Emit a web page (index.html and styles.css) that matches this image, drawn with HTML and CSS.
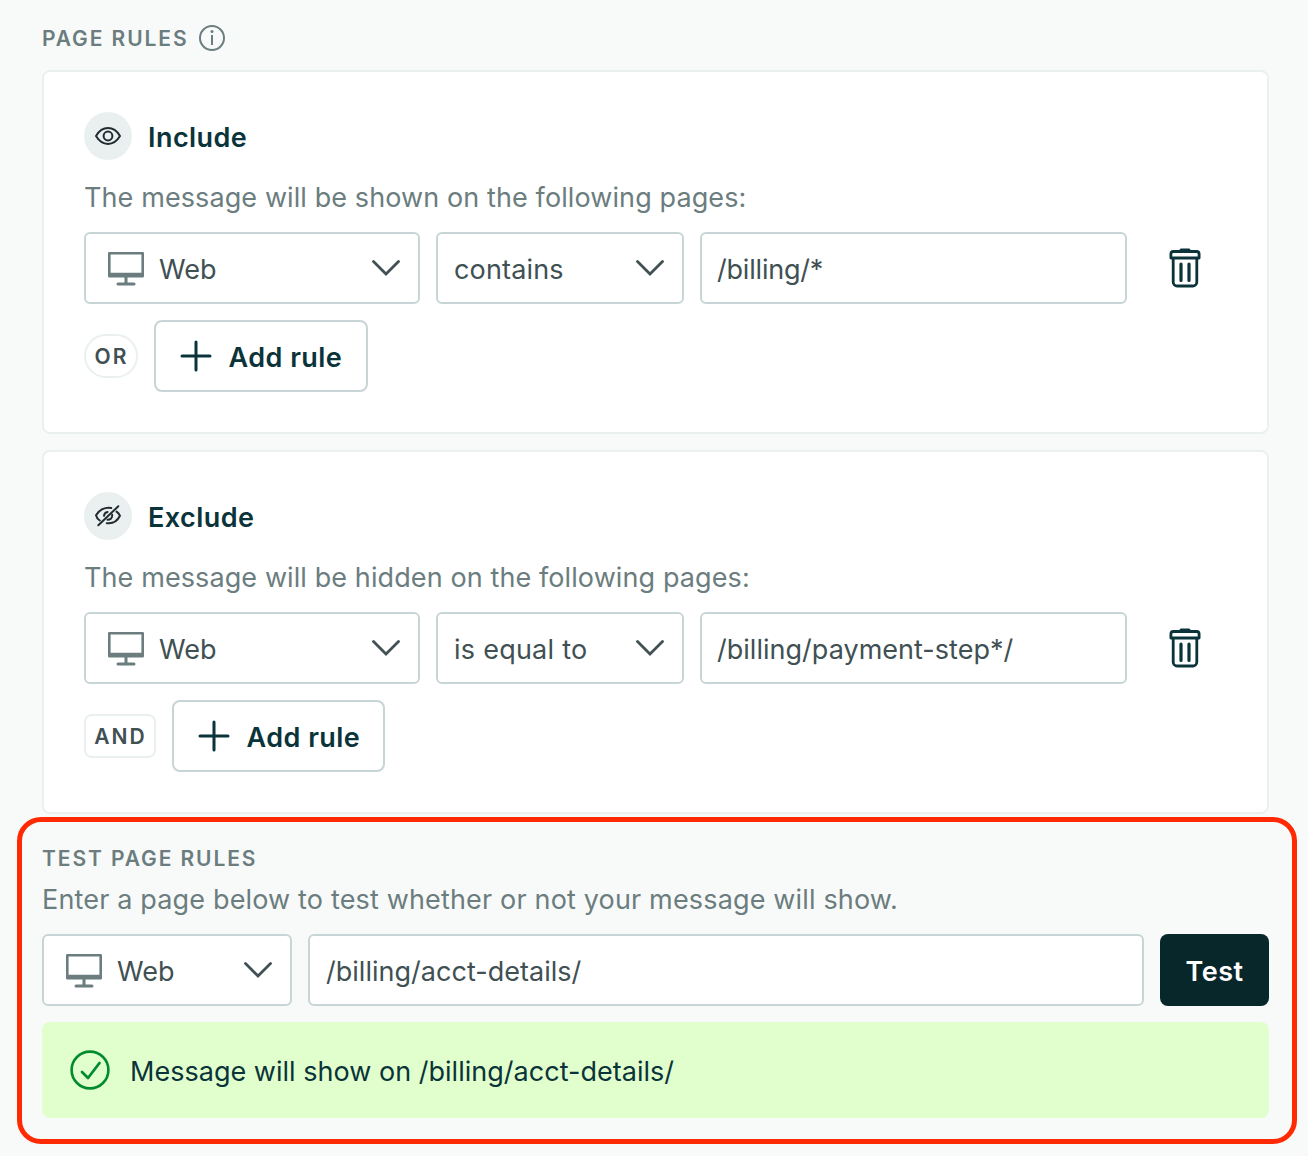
FILE: index.html
```html
<!DOCTYPE html>
<html lang="en">
<head>
<meta charset="utf-8">
<title>Page rules</title>
<link rel="stylesheet" href="styles.css">
</head>
<body>
<svg class="sprite" aria-hidden="true">
  <symbol id="monitor" viewBox="0 0 36 34">
    <path d="M1.300 1.300h33.400v23H1.300z" fill="none" stroke="currentColor" stroke-width="2.600" stroke-linejoin="round"/>
    <path d="M1 20.800h34v4.200H1zM16.500 25h3v6h-3z" fill="currentColor"/>
    <path d="M10 32h16" stroke="currentColor" stroke-width="3" stroke-linecap="round"/>
  </symbol>
  <symbol id="chevron" viewBox="0 0 28 16">
    <path d="M1.500 1.500L14 14L26.500 1.500" fill="none" stroke="currentColor" stroke-width="2.800" stroke-linecap="round"/>
  </symbol>
  <symbol id="plus" viewBox="0 0 32 32">
    <path d="M16 2v28M2 16h28" fill="none" stroke="currentColor" stroke-width="3" stroke-linecap="round"/>
  </symbol>
  <symbol id="trash" viewBox="0 0 32 40">
    <path d="M10.500 3.200V2a1.500 1.500 0 0 1 1.500-1.500h8A1.500 1.500 0 0 1 21.500 2v1.200z" fill="currentColor"/>
    <path d="M1.900 10V6a2.500 2.500 0 0 1 2.500-2.500h23.200a2.500 2.500 0 0 1 2.500 2.500v4z" fill="none" stroke="currentColor" stroke-width="2.800" stroke-linejoin="round"/>
    <path d="M4.200 11v23a4 4 0 0 0 4 4h15.600a4 4 0 0 0 4-4V11" fill="none" stroke="currentColor" stroke-width="2.800"/>
    <path d="M12 16v16.500M20 16v16.500" stroke="currentColor" stroke-width="3.200" stroke-linecap="round"/>
  </symbol>
</svg>
<main class="page">
  <h2 class="label">Page rules
    <svg class="info" viewBox="0 0 26 26"><circle cx="13" cy="13" r="12" fill="none" stroke="currentColor" stroke-width="2"/><path d="M13 10v10" stroke="currentColor" stroke-width="2"/><circle cx="13" cy="6.600" r="1.500" fill="currentColor"/></svg>
  </h2>

  <section class="card">
    <h3 class="title"><span class="badge"><svg viewBox="0 0 26 18"><path d="M1 9C4 4 8.500 1.100 13 1.100S22 4 25 9c-3 5-7.500 7.900-12 7.900S4 14 1 9z" fill="none" stroke="currentColor" stroke-width="2" stroke-linejoin="round"/><circle cx="13" cy="9" r="4.400" fill="none" stroke="currentColor" stroke-width="2"/></svg></span><span class="name">Include</span></h3>
    <p class="desc">The message will be shown on the following pages:</p>
    <div class="rule">
      <div class="field platform"><svg class="monitor"><use href="#monitor"/></svg><span>Web</span><svg class="chevron"><use href="#chevron"/></svg></div>
      <div class="field operator"><span>contains</span><svg class="chevron"><use href="#chevron"/></svg></div>
      <div class="field value short"><span>/billing/*</span></div>
      <svg class="trash"><use href="#trash"/></svg>
    </div>
    <div class="actions">
      <span class="join join-or">OR</span>
      <button class="add"><svg class="plus"><use href="#plus"/></svg><span class="name">Add rule</span></button>
    </div>
  </section>

  <section class="card">
    <h3 class="title"><span class="badge"><svg class="hidden-eye" viewBox="0 0 26 22"><g fill="none" stroke="currentColor" stroke-width="2" stroke-linecap="round"><path d="M23.300 1.300L3.300 20.300"/><path d="M16.300 3C10 1.800 4 5 1 10.300c.5 2.300 2 4 3.800 5.200"/><path d="M21.600 6.600c1.500 1.200 2.600 2.400 3.400 4.200-2.700 5.200-7.600 8.200-13.200 7.400"/><path d="M12.600 6.900C10.600 7.300 9.200 8.700 9 10.800M17.200 9.800c.3 3.200-1.800 5-4.700 5"/></g></svg></span><span class="name">Exclude</span></h3>
    <p class="desc">The message will be hidden on the following pages:</p>
    <div class="rule">
      <div class="field platform"><svg class="monitor"><use href="#monitor"/></svg><span>Web</span><svg class="chevron"><use href="#chevron"/></svg></div>
      <div class="field operator equal"><span>is equal to</span><svg class="chevron"><use href="#chevron"/></svg></div>
      <div class="field value"><span>/billing/payment-step*/</span></div>
      <svg class="trash"><use href="#trash"/></svg>
    </div>
    <div class="actions">
      <span class="join join-and">AND</span>
      <button class="add"><svg class="plus"><use href="#plus"/></svg><span class="name">Add rule</span></button>
    </div>
  </section>

  <section class="test">
    <h2 class="label">Test page rules</h2>
    <p class="desc">Enter a page below to test whether or not your message will show.</p>
    <div class="rule">
      <div class="field test-platform"><svg class="monitor"><use href="#monitor"/></svg><span>Web</span><svg class="chevron"><use href="#chevron"/></svg></div>
      <div class="field test-value"><span>/billing/acct-details/</span></div>
      <button class="run">Test</button>
    </div>
    <div class="result"><svg class="check" viewBox="0 0 40 40"><circle cx="20" cy="20" r="18.400" fill="none" stroke="currentColor" stroke-width="2.600"/><path d="M12 22l6 6L29.500 13" fill="none" stroke="currentColor" stroke-width="2.800" stroke-linecap="round" stroke-linejoin="round"/></svg><span>Message will show on /billing/acct-details/</span></div>
  </section>
  <div class="highlight"></div>
</main>
</body>
</html>
```
FILE: styles.css
```css
* { box-sizing: border-box; }
body { margin: 0; background: #f8faf9; font-family: Inter, "Liberation Sans", sans-serif; font-size: 27px; letter-spacing: 0.02px; color: #405053; }
h2, h3, p { margin: 0; }
svg { display: block; flex: none; }
.sprite { position: absolute; width: 0; height: 0; }
.page { position: relative; height: 1156px; padding: 20px 39px 0 42px; overflow: hidden; }
.label { display: flex; align-items: center; gap: 10px; height: 36px; font-size: 21px; font-weight: 600; letter-spacing: 1.9px; text-transform: uppercase; color: #6b7d7e; }
.info { width: 26px; height: 26px; margin-left: 1px; }
.card { height: 364px; margin-top: 14px; padding: 40px; border: 2px solid #eaf0f0; border-radius: 8px; background: #fff; }
.card + .card { margin-top: 16px; }
.title { display: flex; align-items: center; gap: 16px; height: 48px; font-size: 27px; font-weight: 600; letter-spacing: 0.45px; color: #0a3439; }
.name { padding-top: 2px; }
.badge { display: flex; align-items: center; justify-content: center; width: 48px; height: 48px; border-radius: 50%; background: #eaf0f0; color: #202c2f; }
.badge svg { width: 26px; height: 18px; }
.badge .hidden-eye { height: 22px; }
.desc { height: 40px; line-height: 40px; letter-spacing: 0.1px; color: #6b7d7e; white-space: nowrap; }
.card .desc { margin: 18px 0 14px; }
.rule { display: flex; align-items: center; gap: 16px; }
.field { display: flex; align-items: center; height: 72px; padding: 2px 18px 0 16px; border: 2px solid #c8d5d6; border-radius: 6px; background: #fff; white-space: nowrap; }
.field .chevron { margin-left: auto; margin-top: -2px; }
.platform, .test-platform { padding-left: 22px; }
.platform { width: 336px; }
.operator { width: 248px; letter-spacing: 0.15px; }
.equal { letter-spacing: 0.25px; }
.value { width: 427px; padding-left: 15px; }
.short { letter-spacing: -0.2px; }
.monitor { width: 36px; height: 34px; margin-right: 15px; color: #6b7d7e; }
.chevron { width: 28px; height: 16px; }
.trash { width: 32px; height: 40px; margin-left: 26px; color: #0a3439; }
.actions { display: flex; align-items: center; gap: 16px; margin-top: 16px; }
.join { display: flex; align-items: center; justify-content: center; height: 44px; padding: 1px 0 0 1px; border: 2px solid #eaf0f0; font-size: 21px; font-weight: 600; letter-spacing: 2px; }
.join-or { width: 54px; border-radius: 22px; }
.join-and { width: 72px; border-radius: 8px; }
button { font: inherit; letter-spacing: inherit; }
.add { display: flex; align-items: center; width: 214px; height: 72px; padding: 0 0 0 24px; border: 2px solid #c8d5d6; border-radius: 8px; background: #fff; color: #0a3439; font-size: 27px; font-weight: 600; letter-spacing: 0.45px; }
.join-and + .add { width: 213px; }
.plus { width: 32px; height: 32px; margin-right: 16.6px; }
.test { margin-top: 26px; }
.test .desc { margin-top: 4px; margin-bottom: 14px; letter-spacing: 0.16px; }
.test-platform { width: 250px; }
.test-value { flex: 1; }
.run { width: 109px; height: 72px; padding: 2px 0 0; border: 0; border-radius: 8px; background: #08272b; color: #fff; font-size: 27px; font-weight: 600; letter-spacing: 0.5px; }
.result { display: flex; align-items: center; height: 96px; margin-top: 16px; padding-left: 28px; border-radius: 8px; background: #e1ffcc; color: #0a3439; }
.result span { padding-top: 2px; }
.check { width: 40px; height: 40px; margin-right: 20px; color: #008c2e; }
/* Callout frame drawn over the test section */
.highlight { position: absolute; left: 17px; top: 817px; width: 1280px; height: 327px; border: 5px solid #ff2a04; border-radius: 24px; pointer-events: none; }
```
